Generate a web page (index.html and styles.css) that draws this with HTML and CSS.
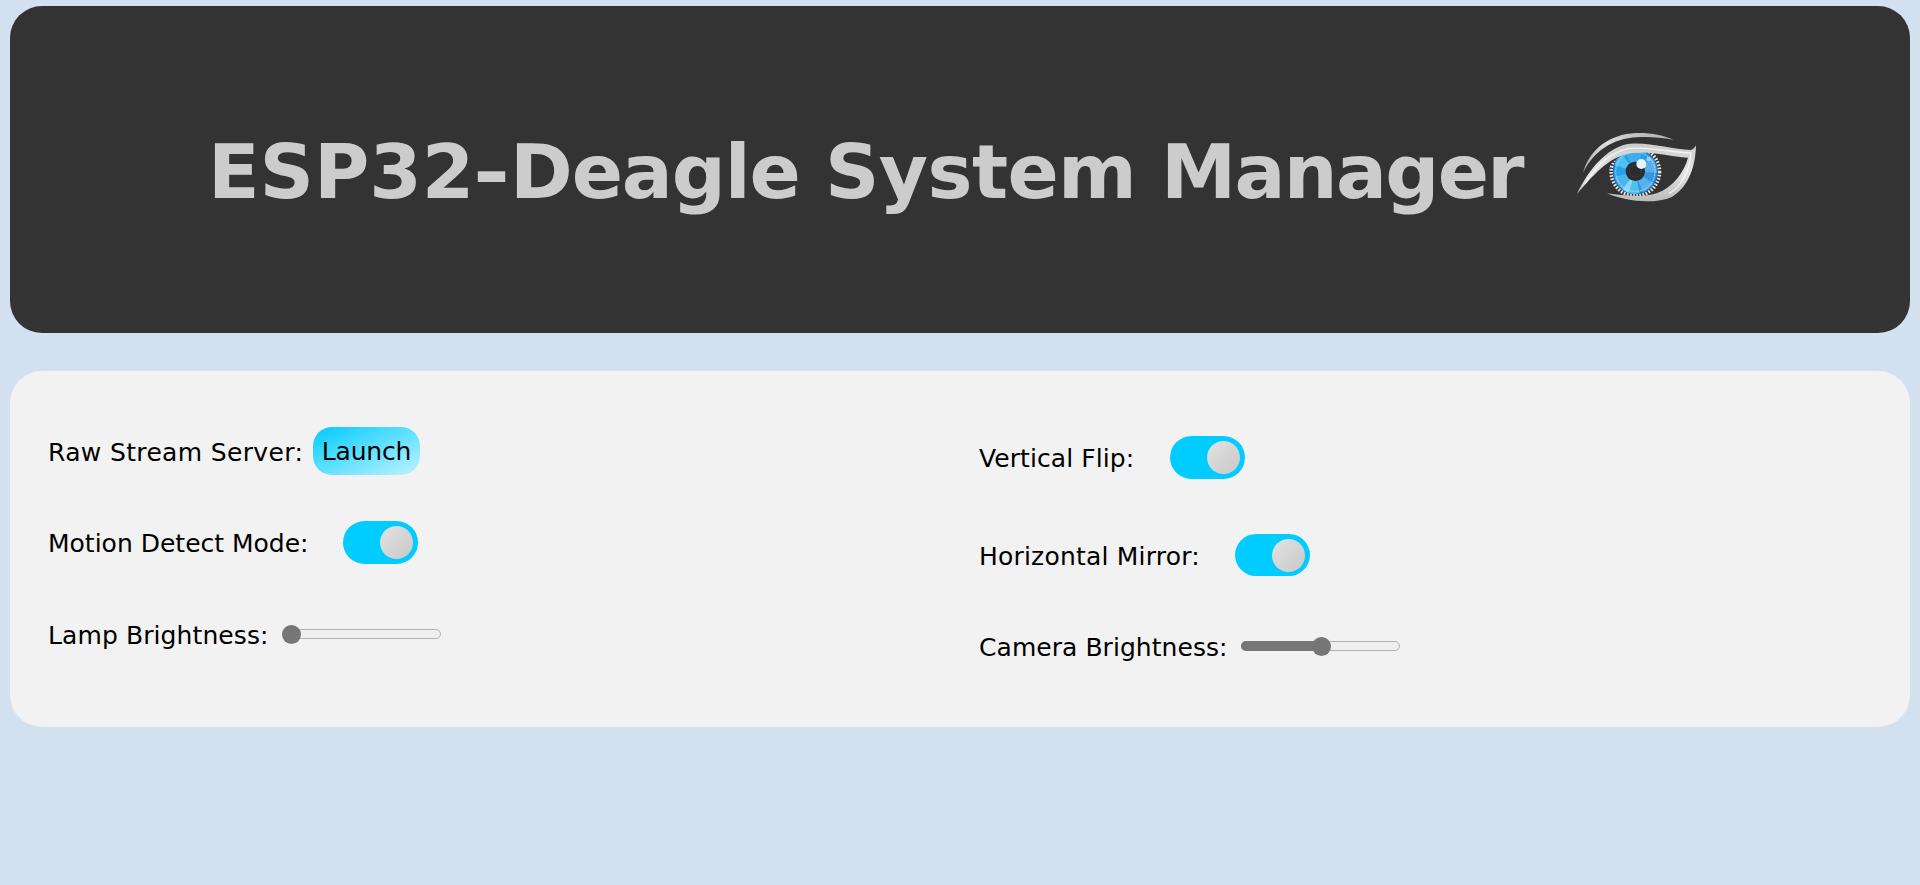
FILE: index.html
```html
<!DOCTYPE html>
<html lang="en">
<head>
<meta charset="utf-8">
<title>ESP32-Deagle System Manager</title>
<link rel="stylesheet" href="styles.css">
</head>
<body>
<header class="banner">
  <h1 class="title"><span class="word word-esp">ESP32</span><span class="word word-dash"><span class="dash">-</span></span><span class="word word-deagle">Deagle </span><span class="word word-system">System </span><span class="word word-manager">Manager</span></h1>
  <svg class="eye" viewBox="0 0 450 300" aria-hidden="true">
    <defs>
      <linearGradient id="silver" x1="0" y1="0" x2="0" y2="1"><stop offset="0" stop-color="#ccc"/><stop offset=".5" stop-color="#e4e4e4"/><stop offset="1" stop-color="#bbb"/></linearGradient>
      <linearGradient id="brow" x1="0" y1="1" x2="1" y2="0"><stop offset="0" stop-color="#aaa"/><stop offset=".5" stop-color="#ddd"/><stop offset="1" stop-color="#aaa"/></linearGradient>
      <linearGradient id="iris" x1="0" y1="0" x2="1" y2="1"><stop offset="0" stop-color="#1fa8ea"/><stop offset="1" stop-color="#3b8fdf"/></linearGradient>
      <clipPath id="lid"><path d="M130 175Q170 118 220 109Q280 104 345 114L390 128V270H130Z"/></clipPath>
    </defs>
    <g clip-path="url(#lid)">
      <circle cx="226" cy="170" r="72" fill="none" stroke="#e8e8e8" stroke-width="12" stroke-dasharray="5 4.5"/>
      <circle cx="226" cy="170" r="66" fill="url(#iris)" stroke="#2878c4" stroke-width="4"/>
      <path d="M226 170L207 234Q221 239 239 235ZM226 170L164 150Q172 128 187 119Z" fill="#4fc0f0"/>
      <path d="M226 170L187 222Q197 231 207 234Z" fill="#8ad6f6"/>
      <path d="M226 170L248 231Q270 222 280 205ZM226 170L276 128Q291 147 290 173Z" fill="#5aaeec"/>
      <path d="M226 170L164 185Q171 208 187 222Z" fill="#46b6ee"/>
      <path d="M226 170L196 114Q220 102 247 110Z" fill="#3cb0ea"/>
      <circle cx="226" cy="170" r="59" fill="none" stroke="#c3ecff" stroke-width="2.5" stroke-dasharray="5 3"/>
      <circle cx="226" cy="169" r="29" fill="#292b2d"/>
      <circle cx="226" cy="169" r="18" fill="none" stroke="#44484a" stroke-width="2"/>
      <circle cx="244" cy="147" r="15" fill="#e3f3fa"/>
      <circle cx="266" cy="132" r="7" fill="#c3e5f6" opacity=".7"/>
    </g>
    <path d="M69 174C88 101 151 58 226 54C268 52 310 60 341 74C301 68 266 64 230 67C160 70 101 108 69 174Z" fill="url(#brow)"/>
    <path d="M51 237C81 173 128 111 190 90C248 75 332 103 391 105Q402 103 408 91C407 151 387 215 337 245C280 271 193 257 141 235C190 241 245 249 290 235C340 217 372 171 384 128C327 125 270 106 213 115C144 125 98 184 51 237Z" fill="url(#silver)"/>
    <path d="M75 206C114 145 151 112 209 100C271 94 333 114 393 114C389 164 366 215 327 236" fill="none" stroke="#fff" stroke-width="4" opacity=".75"/>
  </svg>
</header>
<main class="panel">
  <section class="column">
    <div class="row"><span class="label label-stream">Raw Stream Server:</span><button class="launch">Launch</button></div>
    <div class="row"><span class="label label-motion">Motion Detect Mode:</span><span class="toggle"><span class="knob"></span></span></div>
    <div class="row"><span class="label label-lamp">Lamp Brightness:</span><span class="slider"><span class="thumb"></span></span></div>
  </section>
  <section class="column column-right">
    <div class="row"><span class="label label-flip">Vertical Flip:</span><span class="toggle"><span class="knob"></span></span></div>
    <div class="row"><span class="label label-mirror">Horizontal Mirror:</span><span class="toggle toggle-short"><span class="knob"></span></span></div>
    <div class="row"><span class="label label-camera">Camera Brightness:</span><span class="slider"><span class="fill"></span><span class="thumb thumb-mid"></span></span></div>
  </section>
</main>
</body>
</html>
```
FILE: styles.css
```css
* { box-sizing: border-box; }
body {
  margin: 0;
  padding: 6px 10px;
  background: #d3e0f0;
  color: #000;
  font-family: Verdana, "DejaVu Sans", sans-serif;
}
.banner {
  display: flex;
  height: 327px;
  padding: 109px 0 0 198px;
  border-radius: 32px;
  background: #333;
}
.title {
  display: flex;
  flex: none;
  width: 1352px;
  margin: 0;
  padding-top: 13px;
  color: #ccc;
  font-size: 75.6px;
  line-height: 88px;
  white-space: nowrap;
}
.word { flex: none; }
.word-esp { width: 265px; letter-spacing: -0.1px; }
.word-dash { width: 37px; }
.dash { display: inline-block; transform: scaleX(1.18); transform-origin: left; }
.word-deagle { width: 315px; letter-spacing: -1.1px; }
.word-system { width: 336px; letter-spacing: -0.6px; }
.word-manager { letter-spacing: -1.7px; }
.eye { flex: none; width: 150px; height: 100px; }
.panel {
  display: flex;
  height: 356px;
  margin-top: 38px;
  padding: 34px 38px;
  border-radius: 32px;
  background: #f2f2f2;
}
.column { flex: none; width: 931px; }
.column-right { width: 880px; padding-top: 6px; }
.row { display: flex; align-items: center; height: 92px; }
.row:nth-child(2) { height: 91px; }
.column-right .row:nth-child(1) { height: 93px; }
.column-right .row:nth-child(2) { height: 102px; }
.column-right .row:nth-child(3) { height: 80px; }
.label { flex: none; padding-top: 3px; font-size: 25px; line-height: 30px; white-space: nowrap; }
.label-stream { width: 265px; letter-spacing: 0.35px; }
.label-motion { width: 295px; }
.label-lamp { width: 233.5px; letter-spacing: 0.1px; }
.label-flip { width: 191px; letter-spacing: 0.08px; }
.label-mirror { width: 256px; letter-spacing: 0.2px; }
.label-camera { width: 262px; letter-spacing: 0.05px; }
.launch {
  width: 107px;
  height: 48px;
  padding: 2px 0 0;
  border: 0;
  border-radius: 19px;
  background: linear-gradient(to bottom right, #0cf, #bff3ff);
  color: #000;
  font: 25px/46px Verdana, "DejaVu Sans", sans-serif;
  letter-spacing: -0.2px;
}
.toggle {
  display: flex;
  align-items: center;
  justify-content: flex-end;
  width: 75px;
  height: 43px;
  padding-right: 4.8px;
  border-radius: 22px;
  background: #0cf;
}
.toggle-short { height: 42px; }
.knob { width: 33px; height: 33px; border-radius: 50%; background: linear-gradient(135deg, #e2e2e2, #c8c8c8); }
.slider {
  position: relative;
  width: 159px;
  height: 10px;
  border: 1px solid #b2b2b2;
  border-radius: 5px;
  background: #efefef;
}
.fill { position: absolute; inset: -1px 50% -1px -1px; border-radius: 5px; background: #767676; }
.thumb { position: absolute; left: -1px; top: -5.5px; width: 19px; height: 19px; border-radius: 50%; background: #767676; }
.thumb-mid { left: 69.5px; }
```
